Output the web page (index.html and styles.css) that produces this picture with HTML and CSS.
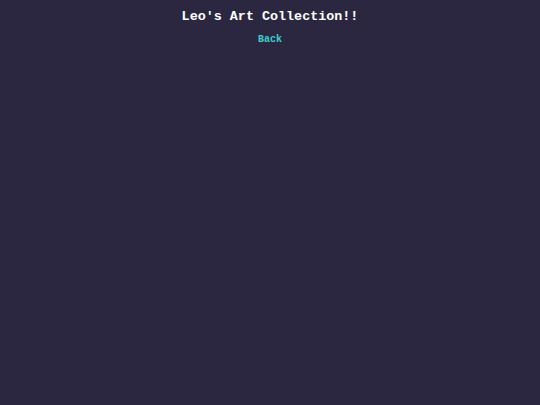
FILE: index.html
```html
<!DOCTYPE html>
<html>
<head>
<meta charset="utf-8">
<link rel="stylesheet" href="styles.css">
</head>
<body>
<div class="header">
  <h1 class="title">Leo's Art Collection!!</h1>
  <a class="back" href="#">Back</a>
</div>
</body>
</html>
```
FILE: styles.css
```css
html, body {
  margin: 0;
  padding: 0;
  background: #2b2740;
  height: 100%;
}
body {
  font-family: Courier, "Courier New", "Nimbus Mono PS", FreeMono, "Liberation Mono", monospace;
}
.header {
  display: flex;
  flex-direction: column;
  align-items: center;
  padding-top: 9px;
}
.title {
  margin: 0;
  font-size: 13.4px;
  line-height: 16px;
  font-weight: bold;
  color: #ffffff;
}
.back {
  margin-top: 9px;
  font-size: 10px;
  line-height: 12px;
  font-weight: bold;
  color: #3dcfcf;
  text-decoration: none;
}
```
